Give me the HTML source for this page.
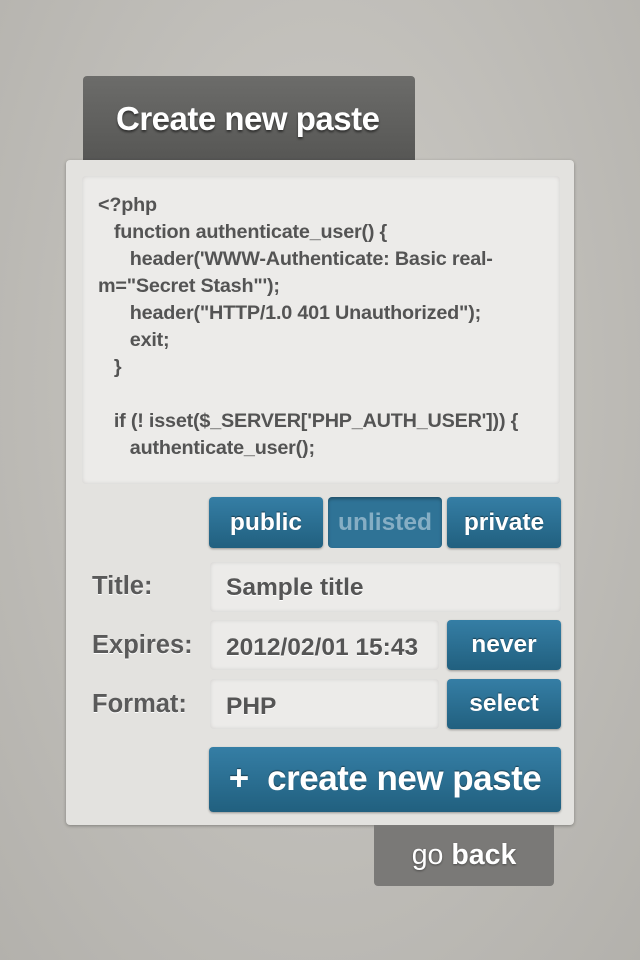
<!DOCTYPE html><html><head><style>
body{margin:0;width:640px;height:960px;background:radial-gradient(ellipse at 50% 40%,#cdcbc6,#b3b1ac);font-family:"Liberation Sans",sans-serif;position:relative;overflow:hidden}
.a{position:absolute;box-sizing:border-box}
.tab{left:83px;top:76px;width:332px;height:90px;background:linear-gradient(#6c6c6a,#555553);border-radius:4px 4px 0 0;color:#fff;font-weight:bold;font-size:33px;padding:24px 0 0 33px;text-shadow:0 2px 2px rgba(0,0,0,.5);letter-spacing:-0.5px}
.panel{left:66px;top:160px;width:508px;height:665px;background:#e3e2df;border-radius:4px;box-shadow:0 1px 3px rgba(0,0,0,.3)}
.code{left:82px;top:176px;width:478px;height:308px;background:#ecebe9;border-radius:4px;box-shadow:inset 0 0 4px rgba(0,0,0,.12);color:#545454;font-weight:bold;font-size:19.8px;line-height:27px;padding:16px 0 0 16px;white-space:pre;letter-spacing:-0.2px}
.btn{background:linear-gradient(#357ea5,#21607f);border-radius:4px;color:#fff;font-weight:bold;font-size:24.5px;text-align:center;text-shadow:0 -1px 1px rgba(0,0,0,.45);box-shadow:0 1px 2px rgba(0,0,0,.35)}
.inp{background:#ecebe9;border-radius:4px;box-shadow:inset 0 0 4px rgba(0,0,0,.12);color:#555;font-weight:bold;font-size:24.5px;padding-left:16px;text-shadow:0 1px 0 #fff}
.lbl{color:#5a5a5a;font-weight:bold;font-size:25.5px;text-shadow:0 1px 0 #fff}
</style></head><body>
<div class="a tab">Create new paste</div>
<div class="a panel"></div>
<div class="a code">&lt;?php
   function authenticate_user() {
      header('WWW-Authenticate: Basic real-
m="Secret Stash"');
      header("HTTP/1.0 401 Unauthorized");
      exit;
   }

   if (! isset($_SERVER['PHP_AUTH_USER'])) {
      authenticate_user();</div>
<div class="a btn" style="left:209px;top:497px;width:114px;height:51px;line-height:51px">public</div>
<div class="a btn" style="left:328px;top:497px;width:114px;height:51px;line-height:51px;background:#2f7396;color:#86aec4;text-shadow:none;box-shadow:inset 0 2px 3px rgba(0,0,0,.3)">unlisted</div>
<div class="a btn" style="left:447px;top:497px;width:114px;height:51px;line-height:51px">private</div>
<div class="a lbl" style="left:92px;top:572px">Title:</div>
<div class="a lbl" style="left:92px;top:631px">Expires:</div>
<div class="a lbl" style="left:92px;top:690px">Format:</div>
<div class="a inp" style="left:210px;top:562px;width:351px;height:50px;line-height:52px">Sample title</div>
<div class="a inp" style="left:210px;top:620px;width:229px;height:50px;line-height:56px">2012/02/01 15:43</div>
<div class="a inp" style="left:210px;top:679px;width:229px;height:50px;line-height:56px">PHP</div>
<div class="a btn" style="left:447px;top:620px;width:114px;height:50px;line-height:50px">never</div>
<div class="a btn" style="left:447px;top:679px;width:114px;height:50px;line-height:50px">select</div>
<div class="a btn" style="left:209px;top:747px;width:352px;height:65px;line-height:64px;font-size:35px;letter-spacing:-0.5px">+&nbsp; create new paste</div>
<div class="a" style="left:374px;top:825px;width:180px;height:61px;background:#7a7977;border-radius:0 0 4px 4px;color:#fff;font-size:28.5px;text-align:center;line-height:60px;text-shadow:0 1px 2px rgba(0,0,0,.4)">go <b>back</b></div>
</body></html>
